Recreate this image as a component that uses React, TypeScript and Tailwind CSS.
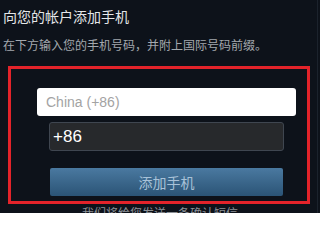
export default function App() {
  return (
    <div
      className="relative w-[320px] h-[213px] overflow-hidden bg-[#0d121a]"
      style={{ fontFamily: '"Noto Sans CJK SC", "Liberation Sans", sans-serif' }}
    >
      <div className="px-[3px] pt-[6px]">
        <h1 className="text-[14px] leading-[20px] text-[#e4e6e8]">向您的帐户添加手机</h1>
        <p className="mt-[11px] text-[12px] leading-[16px] text-[#a3a8ad]">
          在下方输入您的手机号码，并附上国际号码前缀。
        </p>
      </div>

      <div className="ml-[8px] mt-[13px] w-[302px] h-[138px] border-[3px] border-[#e3232a]">
        <div className="ml-[26px] mt-[19px] w-[259px] h-[28px] rounded-[3px] bg-white flex items-center pl-[9px]">
          <span
            className="text-[14px] text-[#a3a3a3]"
            style={{ fontFamily: '"Liberation Sans", sans-serif' }}
          >
            China (+86)
          </span>
        </div>
        <div className="ml-[38px] mt-[6px] w-[235px] h-[29px] rounded-[3px] bg-[#27292c] border border-[#3f4650] flex items-center pl-[3px]">
          <span
            className="text-[17px] text-white"
            style={{ fontFamily: '"Liberation Sans", sans-serif' }}
          >
            +86
          </span>
        </div>
        <div className="ml-[39px] mt-[17px] w-[233px] h-[28px] rounded-[2px] bg-gradient-to-b from-[#4a79a0] to-[#2b5476] flex items-center justify-center">
          <span className="text-[14px] text-[#a8c2d8]">添加手机</span>
        </div>
      </div>

      <p className="mt-[1px] text-center text-[12px] leading-[16px] text-[#8b9096]">
        我们将给您发送一条确认短信
      </p>
      <div className="absolute right-[2px] top-0 h-full w-px bg-[#1b222c]" />
    </div>
  );
}
